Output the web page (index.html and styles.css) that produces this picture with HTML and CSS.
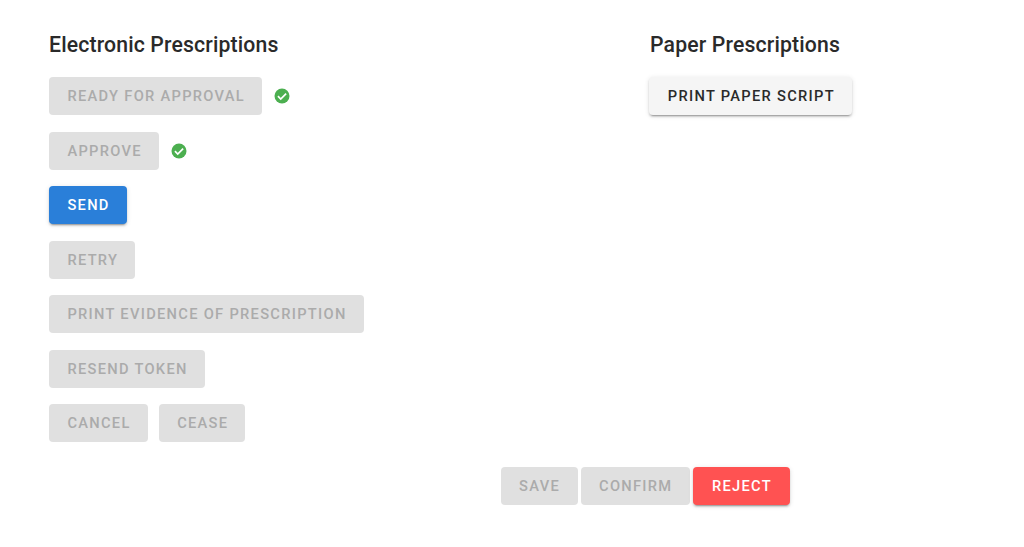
FILE: index.html
```html
<!DOCTYPE html>
<html lang="en">
<head>
<meta charset="utf-8">
<title>Prescriptions</title>
<link rel="stylesheet" href="styles.css">
</head>
<body>
<main class="page">
  <div class="columns">
    <section class="col">
      <h2 class="title">Electronic Prescriptions</h2>
      <div class="stack">
        <div class="row"><button class="btn" disabled>Ready for approval</button><svg class="check" viewBox="0 0 24 24"><circle cx="12" cy="12" r="10" fill="#4caf50"/><path d="M6.6 12.3l3.7 3.7 7.2-7.2" fill="none" stroke="#fff" stroke-width="2.3"/></svg></div>
        <div class="row"><button class="btn" disabled>Approve</button><svg class="check" viewBox="0 0 24 24"><circle cx="12" cy="12" r="10" fill="#4caf50"/><path d="M6.6 12.3l3.7 3.7 7.2-7.2" fill="none" stroke="#fff" stroke-width="2.3"/></svg></div>
        <div class="row"><button class="btn primary">Send</button></div>
        <div class="row"><button class="btn" disabled>Retry</button></div>
        <div class="row"><button class="btn" disabled>Print evidence of prescription</button></div>
        <div class="row"><button class="btn" disabled>Resend token</button></div>
        <div class="row"><button class="btn" disabled>Cancel</button><button class="btn" disabled>Cease</button></div>
      </div>
    </section>
    <section class="col">
      <h2 class="title">Paper Prescriptions</h2>
      <div class="stack">
        <div class="row"><button class="btn light">Print paper script</button></div>
      </div>
    </section>
  </div>
  <div class="actions">
    <button class="btn" disabled>Save</button>
    <button class="btn" disabled>Confirm</button>
    <button class="btn danger">Reject</button>
  </div>
</main>
</body>
</html>
```
FILE: styles.css
```css
* { box-sizing: border-box; }
html, body { margin: 0; background: #fff; }
body { font-family: Roboto, "Liberation Sans", sans-serif; color: #2a2a2a; height: 547px; overflow: hidden; }
.page { width: 790px; padding: 31px 0 0 49px; }
.columns { display: grid; grid-template-columns: 601px 1fr; height: 436px; }
.title { margin: 0 0 19.4px; font-size: 21.2px; font-weight: 500; line-height: 27px; letter-spacing: 0.16px; }
.stack { display: flex; flex-direction: column; gap: 16.45px; }
.row { display: flex; align-items: center; gap: 11px; height: 38px; }
.btn {
  height: 38px; padding: 0 17.1px 0 18.4px; border: 0; border-radius: 4px;
  font-family: inherit; font-size: 14.67px; font-weight: 500; letter-spacing: 1.3px;
  text-transform: uppercase; white-space: nowrap;
  background: #e0e0e0; color: #ababab;
}
.primary, .light, .danger { box-shadow: 0 3px 1px -2px rgba(0,0,0,.2), 0 2px 2px 0 rgba(0,0,0,.14), 0 1px 5px 0 rgba(0,0,0,.12); }
.primary { background: #2a7fd9; color: #fff; }
.light { background: #f5f5f5; color: #2a2a2a; margin-left: -0.6px; }
.danger { background: #ff5252; color: #fff; }
.check { width: 18px; height: 18px; }
.actions { display: flex; justify-content: flex-end; gap: 3px; }
.actions .btn { padding: 0 17.5px 0 18.5px; }
.actions .danger { padding: 0 18px 0 19px; }
```
